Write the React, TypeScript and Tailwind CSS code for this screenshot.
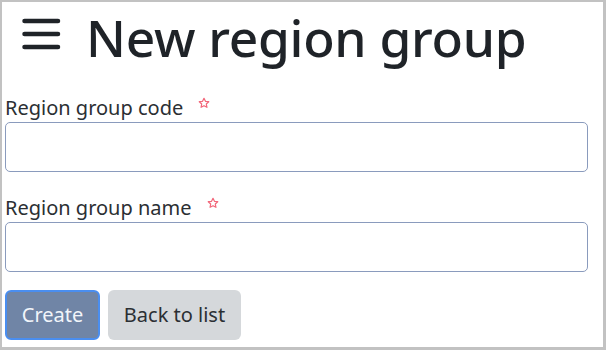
import React from "react";

const font = { fontFamily: '"Noto Sans", "Open Sans", sans-serif' };

const Star: React.FC = () => (
    <svg width="12" height="12" viewBox="0 0 24 24" className="ml-[15px] mb-[12px]">
        <path
            d="M12 2.5l2.9 6.1 6.6.8-4.9 4.6 1.3 6.6L12 17.3l-5.9 3.3 1.3-6.6-4.9-4.6 6.6-.8z"
            fill="none"
            stroke="#f2677a"
            strokeWidth="2.4"
            strokeLinejoin="round"
        />
    </svg>
);

const Field: React.FC<{ label: string }> = ({ label }) => (
    <div className="flex flex-col">
        <label className="flex items-end h-[26px] text-[20px] leading-[26px] text-[#2b2f33]">
            {label}
            <Star />
        </label>
        <input
            type="text"
            className="mt-[1px] h-[50px] w-full rounded-[5px] border-[1.5px] border-[#8a9bbd] bg-white px-3 outline-none"
        />
    </div>
);

const App: React.FC = () => {
    return (
        <div
            className="w-[606px] h-[350px] bg-white border-t-2 border-l-2 border-b-[3px] border-r-[3px] border-[#c2c2c2] overflow-hidden"
            style={font}
        >
            <div className="flex items-center h-[64px] pl-[20px]">
                <svg width="40" height="34" viewBox="0 0 40 34">
                    <g stroke="#1f2328" strokeWidth="4.5" strokeLinecap="round">
                        <line x1="2.5" y1="4" x2="36" y2="4" />
                        <line x1="2.5" y1="17" x2="36" y2="17" />
                        <line x1="2.5" y1="30" x2="36" y2="30" />
                    </g>
                </svg>
                <h1 className="ml-[24px] mt-[6px] text-[51.5px] leading-[64px] font-medium text-[#1f2328] tracking-[-0.3px]">
                    New region group
                </h1>
            </div>

            <div className="pl-[3px] pr-[15px] mt-[29px] flex flex-col gap-[23px]">
                <Field label="Region group code" />
                <Field label="Region group name" />
            </div>

            <div className="flex gap-[8px] pl-[3px] mt-[18px]">
                <button className="h-[50px] w-[95px] rounded-[6px] border-2 border-[#4a8ef0] bg-[#7085a6] text-[20px] text-[#f2f5fa]">
                    Create
                </button>
                <button className="h-[50px] w-[133px] rounded-[6px] bg-[#d5d8db] text-[20px] text-[#2b2f33]">
                    Back to list
                </button>
            </div>
        </div>
    );
};

export default App;
